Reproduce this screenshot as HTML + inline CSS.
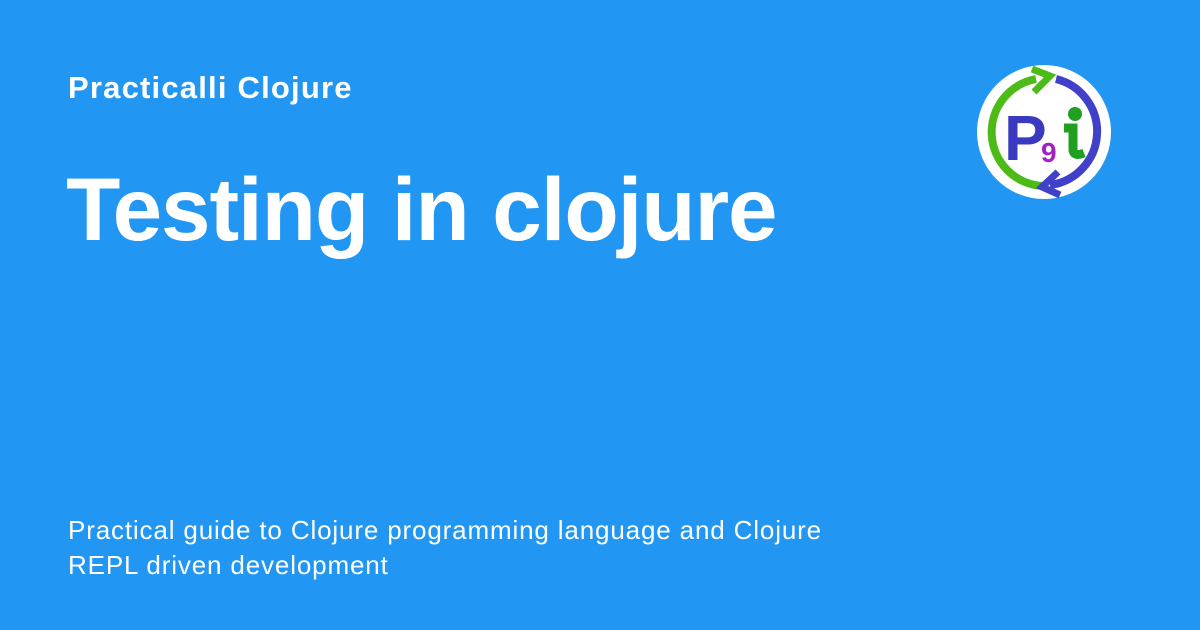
<!DOCTYPE html>
<html><head><style>
body{margin:0;width:1200px;height:630px;background:#2196f3;font-family:"Liberation Sans",sans-serif;color:#fff;position:relative;overflow:hidden}
.t1{position:absolute;left:68px;top:70px;font-size:31px;font-weight:bold;letter-spacing:1.2px}
.t2{position:absolute;left:66px;top:158px;font-size:89px;font-weight:bold;letter-spacing:-1.1px}
.t3{position:absolute;left:68px;top:513px;font-size:26px;line-height:35px;letter-spacing:0.85px}
svg{position:absolute;left:976px;top:64px}
</style></head><body>
<div class="t1">Practicalli Clojure</div>
<div class="t2">Testing in clojure</div>
<div class="t3">Practical guide to Clojure programming language and Clojure<br>REPL driven development</div>
<svg width="136" height="136" viewBox="0 0 136 136">
<circle cx="68" cy="68" r="67" fill="#fff"/>
<path d="M66 122 A54 54 0 0 1 60 15" fill="none" stroke="#4cbb17" stroke-width="8"/>
<path d="M58 28 L74 12 L56 5" fill="none" stroke="#4cbb17" stroke-width="7"/>
<path d="M80 15 A54 54 0 0 1 74 121" fill="none" stroke="#4040c8" stroke-width="8"/>
<path d="M82 108 L66 123 L84 131" fill="none" stroke="#4040c8" stroke-width="7"/>
<text x="28" y="96" font-family="Liberation Sans" font-weight="bold" font-size="64" fill="#3a3ac0">P</text>
<text x="65" y="98" font-family="Liberation Sans" font-weight="bold" font-size="28" fill="#a020c0">9</text>
<circle cx="99" cy="50" r="7" fill="#20a020"/>
<path d="M88 64 L97 64 L97 86 Q98 93 108 89" fill="none" stroke="#20a020" stroke-width="9"/>
</svg>
</body></html>
